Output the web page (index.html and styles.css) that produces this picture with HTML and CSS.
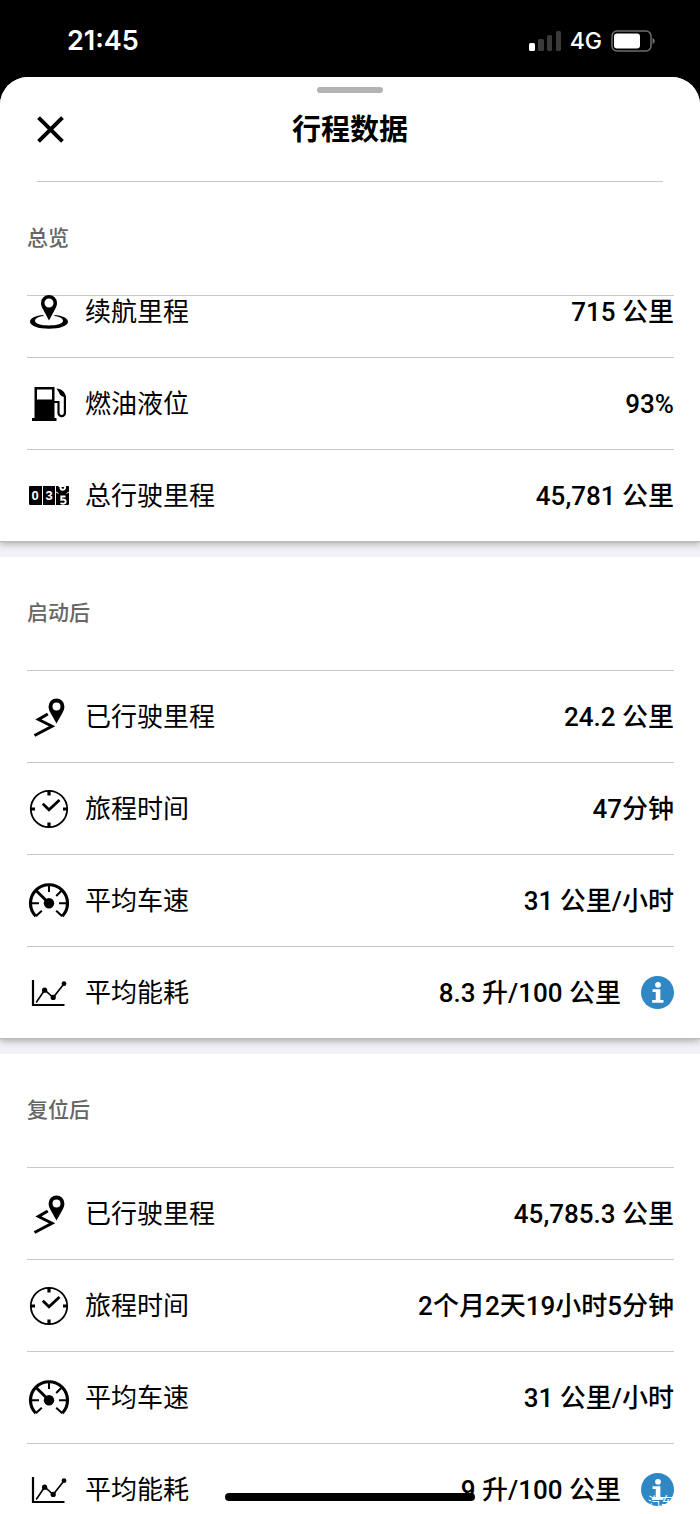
FILE: index.html
```html
<!DOCTYPE html>
<html lang="zh-CN">
<head>
<meta charset="utf-8">
<meta name="viewport" content="width=device-width, initial-scale=1">
<title>行程数据</title>
<link rel="stylesheet" href="styles.css">
</head>
<body>
<svg class="sprite" aria-hidden="true">
  <symbol id="range" viewBox="0 0 44 44">
    <path fill-rule="evenodd" d="M22 5a8 8 0 0 0-8 8c0 2.500.8 4 2 6.300L22 30.500l6-11.200c1.200-2.300 2-3.800 2-6.300a8 8 0 0 0-8-8zm0 3.500a4.500 4.500 0 1 1 0 9a4.500 4.500 0 0 1 0-9z"/>
    <path fill-rule="evenodd" d="M16.500 25C8.500 25.500 3 28.200 3 31.800c0 4.200 8.400 7 19 7s19-2.800 19-7c0-3.600-5.500-6.300-13.500-6.800v1c5.500.8 8.500 2.400 8.500 4.800c0 3-6 4.700-14 4.700S8 33.800 8 30.800c0-2.400 3-4 8.500-4.800z"/>
  </symbol>
  <symbol id="fuel" viewBox="0 0 44 44">
    <path fill-rule="evenodd" d="M7.500 5h20v31h2v3h-24.500v-3h2.500zM10 7.500v10h15v-10z"/>
    <path d="M27 20h4.500v11a3.200 3.200 0 0 0 6.400 0V14" fill="none" stroke="#000" stroke-width="2.200"/>
    <path d="M29.500 6.500c5 .5 9 3.500 9.500 8.500h-2c-3-1-4.500-2.500-5-4.500z"/>
  </symbol>
  <symbol id="route" viewBox="0 0 44 44">
    <path fill-rule="evenodd" d="M29.500 3.500a7.900 7.900 0 0 0-7.900 7.900c0 2.500.9 4.500 2 6.500l5.900 10.600l5.900-10.600c1.100-2 2-4 2-6.500a7.900 7.900 0 0 0-7.900-7.900zm0 3.900a4 4 0 1 1 0 8a4 4 0 0 1 0-8z"/>
    <path d="M20.800 19l-9.300 5.500L25 31.200L7.500 40.500" fill="none" stroke="#000" stroke-width="3"/>
  </symbol>
  <symbol id="clock" viewBox="0 0 44 44">
    <g fill="none" stroke="#000">
      <circle cx="22" cy="22" r="18.200" stroke-width="1.800"/>
      <path d="M22 4v4.500M22 35.500V40M4 22h4M36 22h4" stroke-width="3.200"/>
      <path d="M15.800 16.800l6.200 6L32.500 13" stroke-width="2.800"/>
    </g>
  </symbol>
  <symbol id="speed" viewBox="0 0 44 44">
    <g fill="none" stroke="#000">
      <path d="M8.800 37.200a18.500 18.500 0 1 1 26.400 0" stroke-width="3.200"/>
      <path d="M22 6v7M4 24.300h8M32 24.300h8M29.200 17l5-5M8.800 37.200l6-5.500M35.200 37.200l-6-5.500" stroke-width="2"/>
      <path d="M9 11.500L22 24.300" stroke-width="3"/>
    </g>
    <circle cx="22" cy="24.300" r="5.200"/>
  </symbol>
  <symbol id="chart" viewBox="0 0 44 44">
    <g fill="none" stroke="#000">
      <path d="M6 9v25h31.500" stroke-width="2.200"/>
      <path d="M9.200 31.500l8.500-12.500l8.500 7.500L37 12.700" stroke-width="1.600"/>
    </g>
    <circle cx="17.600" cy="19.200" r="2.600"/><circle cx="26.200" cy="26.400" r="2.600"/><circle cx="37" cy="12.700" r="2.400"/>
  </symbol>
  <symbol id="info" viewBox="0 0 32 32">
    <circle cx="16" cy="16" r="16" fill="#2f87c4"/>
    <circle cx="16.500" cy="8.600" r="2.800" fill="#fff"/>
    <path d="M11.200 12.800h7.600v10.500h3v2.700h-11v-2.700h3.500v-7.900h-3.100z" fill="#fff"/>
  </symbol>
</svg>

<div class="phone">
  <div class="status">
    <time class="clock">21:45</time>
    <div class="indicators">
      <svg class="signal" viewBox="0 0 32 20" aria-hidden="true"><rect x="0" y="12" width="6" height="8" rx="1.500" fill="#fff"/><g fill="#3a3a3a"><rect x="9" y="8" width="6" height="12" rx="1.500"/><rect x="18" y="4" width="5" height="16" rx="1.500"/><rect x="27" y="0" width="5" height="20" rx="1.500"/></g></svg>
      <span class="network">4G</span>
      <svg class="battery" viewBox="0 0 44 22" aria-hidden="true"><rect x="1" y="1" width="39" height="20" rx="5" fill="none" stroke="#6e6e6e" stroke-width="1.500"/><rect x="3" y="3.500" width="26" height="15" rx="3" fill="#fff"/><path d="M41.500 8c3 1 3 5 0 6z" fill="#6e6e6e"/></svg>
    </div>
  </div>

  <main class="sheet">
    <div class="grabber"></div>
    <header class="bar">
      <button class="close" type="button" aria-label="关闭"><svg viewBox="0 0 26 26" aria-hidden="true"><path d="M1.500 1.500l23 23M24.500 1.500l-23 23" stroke="#000" stroke-width="3.800"/></svg></button>
      <h1>行程数据</h1>
    </header>

    <section class="card">
      <h2>总览</h2>
      <ul>
        <li class="row row-clipped"><svg class="icon"><use href="#range"/></svg><span>续航里程</span><strong>715 公里</strong></li>
        <li class="row"><svg class="icon"><use href="#fuel"/></svg><span>燃油液位</span><strong>93%</strong></li>
        <li class="row">
          <svg class="icon" viewBox="0 0 44 44" aria-hidden="true">
            <path d="M3 12h12v19H3a1 1 0 0 1-1-1V13a1 1 0 0 1 1-1zM16 12h12v19H16zM29 12h2l1 1h6l1-1h2a1 1 0 0 1 1 1v17a1 1 0 0 1-1 1H29z"/>
            <text class="dial" x="8" y="26">0</text>
            <text class="dial" x="22" y="26">3</text>
            <g fill="none" stroke="#fff">
              <path d="M33.500 12v1.500a2.300 2.300 0 0 0 4.600 0V12" stroke-width="1.900"/>
              <path d="M38.500 22.500h-4.200v3.300c3.200-.8 4.400.3 4.400 1.900c0 2-2.600 2.600-5.200 1.400" stroke-width="1.900"/>
              <path d="M29 18l2.500 1.500M39.500 19.500l2.500-1.500" stroke-width="1"/>
            </g>
          </svg>
          <span>总行驶里程</span><strong>45,781 公里</strong>
        </li>
      </ul>
    </section>

    <section class="card">
      <h2>启动后</h2>
      <ul>
        <li class="row"><svg class="icon"><use href="#route"/></svg><span>已行驶里程</span><strong>24.2 公里</strong></li>
        <li class="row"><svg class="icon"><use href="#clock"/></svg><span>旅程时间</span><strong>47分钟</strong></li>
        <li class="row"><svg class="icon"><use href="#speed"/></svg><span>平均车速</span><strong>31 公里/小时</strong></li>
        <li class="row"><svg class="icon"><use href="#chart"/></svg><span>平均能耗</span><strong>8.3 升/100 公里</strong><button class="info" type="button" aria-label="说明"><svg><use href="#info"/></svg></button></li>
      </ul>
    </section>

    <section class="card">
      <h2>复位后</h2>
      <ul>
        <li class="row"><svg class="icon"><use href="#route"/></svg><span>已行驶里程</span><strong>45,785.3 公里</strong></li>
        <li class="row"><svg class="icon"><use href="#clock"/></svg><span>旅程时间</span><strong>2个月2天19小时5分钟</strong></li>
        <li class="row"><svg class="icon"><use href="#speed"/></svg><span>平均车速</span><strong>31 公里/小时</strong></li>
        <li class="row"><svg class="icon"><use href="#chart"/></svg><span>平均能耗</span><strong>9 升/100 公里</strong><button class="info" type="button" aria-label="说明"><svg><use href="#info"/></svg></button></li>
      </ul>
    </section>
  </main>
  <div class="home"></div>
  <span class="watermark">汽车</span>
</div>
</body>
</html>
```
FILE: styles.css
```css
* { box-sizing: border-box; }
body { margin: 0; background: #000; color: #000; font-family: "Noto Sans CJK SC", sans-serif; }
h1, h2, ul { margin: 0; padding: 0; }
ul { list-style: none; }
button { padding: 0; border: 0; background: none; }
svg { display: block; }
.sprite { position: absolute; width: 0; height: 0; }
.dial { font: 700 13px "Liberation Sans", sans-serif; fill: #fff; text-anchor: middle; }

.phone { position: relative; display: flex; flex-direction: column; height: 100vh; overflow: hidden; }
.status { flex: none; display: flex; justify-content: space-between; align-items: center; height: 77px; padding: 4px 45px 0 67px; color: #fff; font-family: Inter, sans-serif; }
.clock { font-size: 27px; font-weight: 600; }
.indicators { display: flex; align-items: center; gap: 9px; }
.signal { width: 32px; height: 20px; }
.network { font-size: 23px; font-weight: 500; }
.battery { width: 44px; height: 22px; }

.sheet { flex: 1; min-height: 0; overflow: hidden; border-radius: 28px 28px 0 0; background: #f2f1f7; }
.grabber { height: 17px; padding-top: 10px; background: #fff; }
.grabber::before { content: ""; display: block; width: 66px; height: 6px; margin: 0 auto; border-radius: 3px; background: #b3b3b3; }
.bar { display: grid; grid-template-columns: 1fr auto 1fr; align-items: center; height: 88px; padding: 0 37px 18px; background: linear-gradient(#c8c8c8, #c8c8c8) bottom / calc(100% - 74px) 1px no-repeat #fff; }
.close { width: 27px; height: 27px; }
.close svg { width: 27px; height: 27px; }
h1 { padding-bottom: 4px; font-size: 29px; font-weight: 700; line-height: 40px; }

.card { position: relative; padding: 0 26px 0 27px; background: #fff; box-shadow: 0 1px 1px #bbb, 0 3px 7px #aaa; clip-path: inset(0 0 -16px 0); }
.card + .card { margin-top: 16px; }
h2 { padding-bottom: 5px; color: #666; font-size: 21px; font-weight: 500; line-height: 108px; }
.row { display: flex; align-items: center; height: 92px; border-top: 1px solid #c8c8c8; font-size: 26px; line-height: 38px; }
.row-clipped { height: 62px; padding-bottom: 29px; }
.row span { padding-bottom: 4px; }
.icon { flex: none; width: 44px; height: 44px; margin-right: 14px; }
.row strong { margin-left: auto; font-family: Roboto, "Noto Sans CJK SC", sans-serif; font-weight: 500; }
.info { width: 33px; height: 33px; margin-left: 20px; }
.info svg { width: 33px; height: 33px; }

.home { position: absolute; bottom: 13px; left: 50%; width: 250px; height: 8px; margin-left: -125px; border-radius: 4px; background: #000; }
.watermark { position: absolute; right: 26px; bottom: 6px; color: #fff; font-size: 13px; line-height: 14px; }
```
